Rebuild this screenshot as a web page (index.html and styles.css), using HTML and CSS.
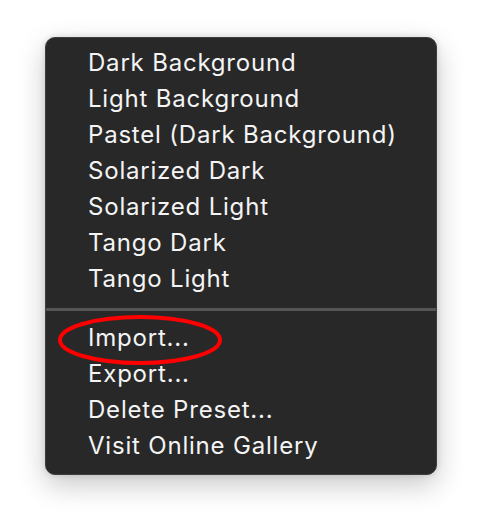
FILE: index.html
```html
<!DOCTYPE html>
<html>
<head>
<meta charset="utf-8">
<link rel="stylesheet" href="styles.css">
</head>
<body>
<div class="menu">
  <ul class="group">
    <li class="item">Dark Background</li>
    <li class="item">Light Background</li>
    <li class="item">Pastel (Dark Background)</li>
    <li class="item">Solarized Dark</li>
    <li class="item">Solarized Light</li>
    <li class="item">Tango Dark</li>
    <li class="item">Tango Light</li>
  </ul>
  <div class="separator"></div>
  <ul class="group">
    <li class="item highlight">Import...
      <svg class="circle" width="168" height="54" viewBox="0 0 168 54"><ellipse cx="84" cy="27" rx="80" ry="23" fill="none" stroke="#ff0000" stroke-width="4"/></svg>
    </li>
    <li class="item">Export...</li>
    <li class="item">Delete Preset...</li>
    <li class="item">Visit Online Gallery</li>
  </ul>
</div>
</body>
</html>
```
FILE: styles.css
```css
html, body {
  margin: 0;
  padding: 0;
  background: #ffffff;
}
body {
  width: 482px;
  height: 528px;
  padding-top: 37px;
  padding-left: 45px;
  box-sizing: border-box;
}
.menu {
  width: 392px;
  height: 438px;
  box-sizing: border-box;
  background: #282828;
  border: 1.5px solid #3e3e3e;
  border-radius: 10px;
  box-shadow: 0 10px 28px rgba(0,0,0,0.22), 0 0 6px rgba(0,0,0,0.12);
  padding-top: 7px;
  font-family: "Inter", "Liberation Sans", sans-serif;
  font-size: 24px;
  font-weight: 400;
  letter-spacing: 0.8px;
  color: #f4f4f4;
}
.group {
  list-style: none;
  margin: 0;
  padding: 0;
}
.item {
  height: 36px;
  line-height: 36px;
  padding-left: 42px;
  position: relative;
}
.separator {
  height: 3px;
  margin: 11px 0 9px;
  background: #555555;
}
.circle {
  position: absolute;
  left: 10px;
  top: -7px;
}
```
